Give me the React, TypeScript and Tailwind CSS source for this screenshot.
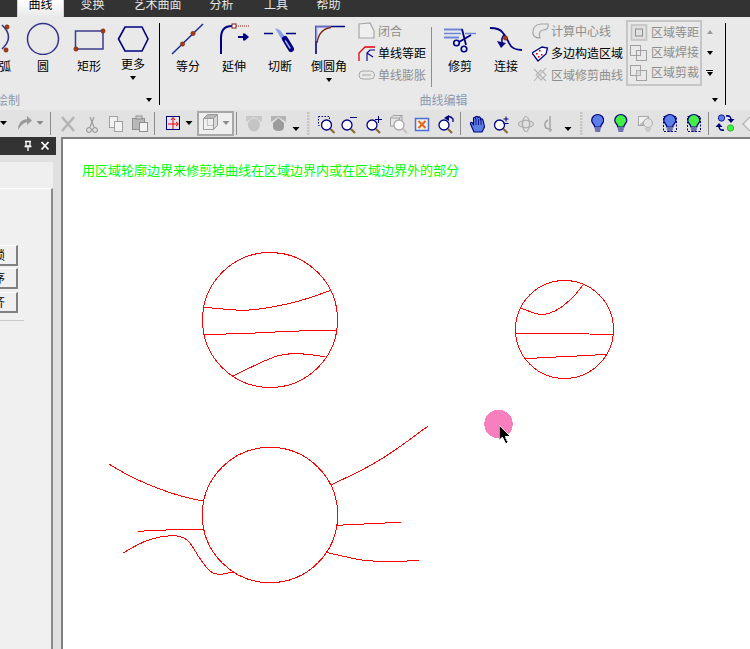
import React from "react";

const NAVY = "#000080";
const GR = "#a6a6a6";

const Caret = ({ c = "border-t-black" }: { c?: string }) => (
  <div className={`w-0 h-0 border-x-[3.5px] border-t-[4px] border-x-transparent ${c}`} />
);

const Big = ({ x, w, label, caret, up, children }: { x: number; w: number; label: string; caret?: boolean; up?: boolean; children: React.ReactNode }) => (
  <div className="flex flex-col items-center shrink-0" style={{ width: w }}>
    <svg width={w} height={34} viewBox={`${x} 21 ${w} 34`} className="shrink-0">{children}</svg>
    <div className={`text-[12px] leading-4 text-black whitespace-nowrap ${up ? "mt-[1px]" : "mt-[3px]"}`}>{label}</div>
    {caret && <div className="mt-[4px]"><Caret /></div>}
  </div>
);

const Row = ({ x, cy, w = 17, h, mt, label, on, children }: { x: number; cy: number; w?: number; h: string; mt: string; label: string; on?: boolean; children: React.ReactNode }) => (
  <div className={`flex items-center ${h} ${mt}`}>
    <svg width={w} height={18} viewBox={`${x} ${cy - 9} ${w} 18`} className="shrink-0">{children}</svg>
    <span className={`ml-[2px] text-[12px] leading-4 whitespace-nowrap ${on ? "text-black" : "text-[#8e8e8e]"}`}>{label}</span>
  </div>
);

const BoxRow = ({ x, cy, label, children }: { x: number; cy: number; label: string; children: React.ReactNode }) => (
  <div className="flex items-center h-5">
    <svg width={18} height={18} viewBox={`${x} ${cy - 9} 18 18`} className="shrink-0">{children}</svg>
    <span className="ml-[3px] text-[12px] leading-4 text-[#8e8e8e] whitespace-nowrap">{label}</span>
  </div>
);

const Cell = ({ a, b, children }: { a: number; b: number; children?: React.ReactNode }) => (
  <svg width={b - a} height={27} viewBox={`${a} 110 ${b - a} 27`} className="shrink-0">{children}</svg>
);

const Sep = () => <div className="w-px h-[23px] bg-[#8c8c8c] shrink-0" />;

const Tri = ({ x, y = 123, c = "#000" }: { x: number; y?: number; c?: string }) => (
  <polygon points={`${x - 3.5},${y - 2} ${x + 3.5},${y - 2} ${x},${y + 2}`} fill={c} />
);

const Mag = ({ x, y, c = NAVY, h = "#8a6a28" }: { x: number; y: number; c?: string; h?: string }) => (
  <g>
    <line x1={x + 4} y1={y + 4} x2={x + 8} y2={y + 8} stroke={h} strokeWidth="2.2" />
    <circle cx={x} cy={y} r="5" fill="#fff" stroke={c} strokeWidth="1.3" />
  </g>
);

const Bulb = ({ x, f, s = NAVY }: { x: number; f: string; s?: string }) => (
  <g>
    <path d={`M${x - 3} 127 C${x - 3} 124 ${x - 6} 123.5 ${x - 6} 120.5 A6 6 0 0 1 ${x + 6} 120.5 C${x + 6} 123.5 ${x + 3} 124 ${x + 3} 127 Z`} fill={f} stroke={s} strokeWidth="1.2" />
    <path d={`M${x - 3} 129 H${x + 3} M${x - 2.5} 131 H${x + 2.5}`} stroke={s} strokeWidth="1.2" />
  </g>
);

const Grip = ({ x }: { x: number }) => (
  <g fill="#c4c4c4">
    {[112, 115, 118, 121, 124, 127, 130, 133].map((y) => (
      <rect key={y} x={x} y={y} width="2.5" height="2" />
    ))}
  </g>
);

const smooth = (p: number[][]) => {
  let d = `M${p[0][0]} ${p[0][1]}`;
  for (let i = 1; i < p.length - 1; i++) {
    const mx = (p[i][0] + p[i + 1][0]) / 2;
    const my = (p[i][1] + p[i + 1][1]) / 2;
    d += ` Q${p[i][0]} ${p[i][1]} ${mx} ${my}`;
  }
  const l = p[p.length - 1];
  return d + ` L${l[0]} ${l[1]}`;
};

const curves: number[][][] = [
  [[203.3, 307.3], [223.3, 309], [243.3, 310.7], [263.3, 308.7], [283.3, 305], [303.3, 300], [330, 290.7]],
  [[203.3, 334.7], [253.3, 333.3], [286.7, 331.3], [336.7, 330]],
  [[232.7, 376.3], [270, 357.3], [290, 353.3], [306.7, 354], [325, 356.7]],
  [[520.3, 308], [531.7, 312.3], [541.7, 315.3], [555, 311.7], [566.7, 303.3], [576.7, 293.3], [583.7, 284]],
  [[515.3, 333.3], [564.3, 333.7], [613.3, 334.3]],
  [[524.3, 358.7], [555, 357], [585, 355.7], [605.7, 354.3]],
  [[109.3, 464.3], [120, 471], [140, 481], [160, 489.3], [183.3, 497], [203.3, 501]],
  [[138.3, 531.3], [155, 530.3], [188.3, 529.3], [203.3, 529]],
  [[122.7, 553.3], [140, 542.7], [160, 536.3], [179.3, 535.3], [190, 541.7], [198.3, 556.7], [208.3, 570], [216.7, 575.3], [233.3, 572]],
  [[330.7, 485], [363.3, 470], [393.3, 451.7], [427.7, 426.3]],
  [[336.7, 525.3], [370, 523.7], [401, 522.3]],
  [[326, 552.3], [353.3, 558.7], [370, 561.3], [403.3, 561.3], [419, 560.3]],
];

const Dot = ({ x, y }: { x: number; y: number }) => <circle cx={x} cy={y} r="2.2" fill="#a63a16" stroke="#6b2a10" strokeWidth="0.5" />;

export default function App() {
  return (
    <div className="w-[750px] h-[649px] overflow-hidden flex flex-col bg-[#e4e4e4] font-['Noto_Sans_CJK_SC',sans-serif]">
      {/* tab bar */}
      <div className="h-[17px] bg-[#333333] flex shrink-0 overflow-hidden text-[12px] leading-[12px] text-[#e6e6e6]">
        <div className="w-[17px] shrink-0" />
        <div className="w-[47px] h-[17px] bg-gradient-to-b from-[#ffffff] to-[#e9e9e9] border-x border-[#b9dbe4] text-black text-center shrink-0">
          <div className="-mt-[2px]">曲线</div>
        </div>
        <div className="w-[57px] text-center shrink-0"><div className="-mt-[2px]">变换</div></div>
        <div className="w-[73px] text-center shrink-0"><div className="-mt-[2px]">艺术曲面</div></div>
        <div className="w-[55px] text-center shrink-0"><div className="-mt-[2px]">分析</div></div>
        <div className="w-[54px] text-center shrink-0"><div className="-mt-[2px]">工具</div></div>
        <div className="w-[51px] text-center shrink-0"><div className="-mt-[2px]">帮助</div></div>
      </div>

      {/* ribbon */}
      <div className="h-[93px] bg-[#e9e9e9] flex shrink-0 overflow-hidden">
        {/* group 1 */}
        <div className="-ml-[14px] w-[173px] shrink-0 flex flex-col">
          <div className="flex pt-[4px]">
            <Big x={-14} w={38} label="弧">
              <path d="M3 25 Q16 37 3 49" fill="none" stroke="#33338a" strokeWidth="1.6" transform="translate(-1 0)" />
              <Dot x={7} y={27} />
              <Dot x={6} y={50} />
            </Big>
            <Big x={24} w={38} label="圆">
              <circle cx="43" cy="39" r="15.5" fill="none" stroke="#33338a" strokeWidth="1.5" />
            </Big>
            <Big x={62} w={54} label="矩形">
              <rect x="75.5" y="31" width="27.5" height="18" fill="none" stroke="#3d3d90" strokeWidth="1.5" />
              <Dot x={103} y={31} />
              <Dot x={76} y={49} />
            </Big>
            <Big x={116} w={34} label="更多" caret up>
              <polygon points="118.5,39 125,27 142,27 148,39 142,51 125,51" fill="none" stroke={NAVY} strokeWidth="1.6" />
            </Big>
          </div>
          <div className="mt-auto h-5 flex items-center justify-between pl-[10px] pr-[7px] text-[12px] leading-4 text-[#8c9ab0]">
            <span>绘制</span>
            <Caret />
          </div>
        </div>

        <div className="w-px h-[82px] mt-[6px] bg-black shrink-0" />

        {/* group 2 */}
        <div className="ml-px w-[564px] shrink-0 flex flex-col">
          <div className="flex pt-[4px] pl-[4px]">
            <Big x={165} w={46} label="等分">
              <line x1="172" y1="54" x2="203" y2="24" stroke="#1a2a90" strokeWidth="1.5" />
              <Dot x={193} y={33.5} />
              <Dot x={182.5} y={44} />
            </Big>
            <Big x={211} w={46} label="延伸">
              <path d="M221 54 V38 Q221 26 232 26" fill="none" stroke={NAVY} strokeWidth="2" />
              <rect x="232" y="24" width="4" height="4" fill="#fff" stroke="#7a1a10" />
              <line x1="236" y1="26" x2="249" y2="26" stroke="#8a2015" strokeDasharray="1 1" />
              <path d="M238 37 H243" stroke={NAVY} strokeWidth="2" />
              <polygon points="243,33.5 245,33.5 249,37 245,40.5 243,40.5" fill={NAVY} />
            </Big>
            <Big x={257} w={46} label="切断">
              <path d="M264 33.5 H273 M286 33.5 H296" stroke={NAVY} strokeWidth="1.6" />
              <polygon points="275,28 280,30 286,38 282,40" fill="#8aa0e8" />
              <path d="M285 39 L291 49" stroke={NAVY} strokeWidth="6" strokeLinecap="round" />
              <path d="M285.5 41 L290 48" stroke="#9fb0f0" strokeWidth="1.5" strokeLinecap="round" />
            </Big>
            <Big x={303} w={52} label="倒圆角" caret>
              <path d="M316 54 V26.5 H345" fill="none" stroke={NAVY} strokeWidth="1.6" />
              <path d="M316.5 41 V27 H331" fill="none" stroke="#8b97e0" strokeWidth="1.6" />
              <path d="M317 43 Q319 29 331 27.5" fill="none" stroke="#7a2a20" strokeWidth="1.3" />
            </Big>
            <div className="w-[76px] shrink-0 pl-[2px] flex flex-col">
              <Row x={356} cy={31} h="h-5" mt="mt-0" label="闭合" w={19}>
                <polygon points="358,24 369,23 373,31 373,38 358,38" fill="#efefef" stroke={GR} strokeWidth="1.2" />
              </Row>
              <Row x={356} cy={52} h="h-[21px]" mt="mt-px" label="单线等距" on w={19}>
                <path d="M358 60 V52 L364 46 H374" fill="none" stroke="#e8000f" strokeWidth="1.3" />
                <path d="M366 60 V52 L369 49 H374 M366 52 L372 56" fill="none" stroke={NAVY} strokeWidth="1.1" />
              </Row>
              <Row x={356} cy={75} h="h-[22px]" mt="mt-px" label="单线膨胀" w={19}>
                <rect x="358" y="71" width="15.5" height="8" rx="4" fill="none" stroke={GR} />
                <line x1="361" y1="75" x2="370" y2="75" stroke={GR} />
              </Row>
            </div>
            <div className="w-px h-[60px] mt-[6px] bg-[#8c8c8c] shrink-0" />
            <div className="w-[5px] shrink-0" />
            <Big x={437} w={46} label="修剪">
              <path d="M444 29.5 H462" stroke="#6f86d8" strokeWidth="2" />
              <path d="M444 33.5 H461 M465 33.5 H476" stroke="#6f86d8" strokeWidth="1.6" />
              <path d="M444 37.5 H459" stroke="#6f86d8" strokeWidth="2" />
              <path d="M459 42 L471 35 M466 45 L462 29" stroke={NAVY} strokeWidth="1.8" />
              <circle cx="456.5" cy="43" r="2.8" fill="none" stroke={NAVY} strokeWidth="1.6" />
              <circle cx="464" cy="49" r="2.8" fill="none" stroke={NAVY} strokeWidth="1.6" />
            </Big>
            <Big x={483} w={46} label="连接">
              <path d="M490 28 Q500 28 503 33 Q507 38 509 43 Q512 50 522 50" fill="none" stroke={NAVY} strokeWidth="1.8" />
              <path d="M505 34 Q500 38 503 45" fill="none" stroke={NAVY} strokeWidth="1.5" />
              <polygon points="497,41 506,43 501,48" fill={NAVY} />
              <Dot x={505.5} y={38} />
            </Big>
            <div className="w-[97px] shrink-0 pl-[3px] flex flex-col">
              <Row x={532} cy={31} h="h-5" mt="mt-0" label="计算中心线">
                <path d="M533 34 Q532 25 541 24 H548 Q549 30 543 30 Q538 31 540 38 Q534 38 533 34Z" fill="none" stroke={GR} strokeWidth="1.2" />
              </Row>
              <Row x={532} cy={52} h="h-[21px]" mt="mt-px" label="多边构造区域" on>
                <polygon points="532,52 542,46 547.5,47 546,53 538,60" fill="#fff" stroke={NAVY} strokeWidth="1.3" />
                <g fill="#e00010">
                  <rect x="539" y="49" width="1.6" height="1.6" />
                  <rect x="536" y="52" width="1.6" height="1.6" />
                  <rect x="541" y="53" width="1.6" height="1.6" />
                  <rect x="538" y="55" width="1.6" height="1.6" />
                </g>
              </Row>
              <Row x={532} cy={75} h="h-[22px]" mt="mt-px" label="区域修剪曲线">
                <path d="M534 69 L546 81 M546 68 L534 81 M536 75 L541 70 L546 75 L541 80Z" fill="none" stroke="#b4b4b4" strokeWidth="1.1" />
              </Row>
            </div>
            <div className="w-[76px] h-[66px] -mt-px shrink-0 border-2 border-[#c6c6c6] pl-[2px]">
              <BoxRow x={631} cy={32} label="区域等距">
                <rect x="632.5" y="25" width="15" height="15" fill="#e0e0e0" stroke="#c0c0c0" strokeWidth="1.5" />
                <rect x="636.5" y="29" width="7" height="7" fill="none" stroke="#8e8e8e" />
              </BoxRow>
              <BoxRow x={631} cy={52} label="区域焊接">
                <rect x="631.5" y="45.5" width="10" height="10" fill="none" stroke="#a0a0a0" />
                <rect x="637.5" y="50.5" width="10" height="10" fill="none" stroke="#a0a0a0" />
                <rect x="637.5" y="50.5" width="4" height="5" fill="none" stroke="#a0a0a0" strokeDasharray="1 1" />
              </BoxRow>
              <BoxRow x={631} cy={72} label="区域剪裁">
                <rect x="631.5" y="65.5" width="10" height="10" fill="none" stroke="#a0a0a0" />
                <rect x="637.5" y="70.5" width="10" height="10" fill="none" stroke="#a0a0a0" />
                <rect x="637.5" y="70.5" width="4" height="5" fill="#dcdcdc" stroke="#a0a0a0" strokeDasharray="1 1" />
              </BoxRow>
            </div>
            <div className="w-[15px] shrink-0 flex flex-col items-center -mt-px">
              <div className="h-[23px] flex items-center pt-[1px]">
                <div className="w-0 h-0 border-x-[3.5px] border-b-[4px] border-x-transparent border-b-[#9a9a9a]" />
              </div>
              <div className="h-[20px] flex items-center"><Caret /></div>
              <div className="h-[20px] flex flex-col items-center justify-center gap-[1px]">
                <div className="w-[7px] h-px bg-black" />
                <Caret />
              </div>
            </div>
          </div>
          <div className="mt-auto h-5 flex items-center pr-[7px] text-[12px] leading-4 text-[#8c9ab0]">
            <span className="flex-1 text-center pl-[14px]">曲线编辑</span>
            <Caret />
          </div>
        </div>

        <div className="w-px h-[82px] mt-[6px] bg-black shrink-0" />
      </div>

      {/* toolbar */}
      <div className="h-[27px] bg-[#e2e2e2] flex items-center shrink-0 overflow-hidden">
        <Cell a={0} b={50}>
          <Tri x={3.5} />
          <path d="M18 130 Q18 120 27 119 V116 L32 120.5 L27 125 V122 Q22 123 18 130Z" fill="#9a9a9a" />
          <Tri x={40} c="#8a8a8a" />
        </Cell>
        <Sep />
        <Cell a={51} b={154}>
          <path d="M62 117 L74 131 M74 117 L62 131" stroke="#b4b4b4" strokeWidth="2.5" />
          <path d="M94 117 L90 127 M90 117 L94 127" stroke="#9a9a9a" strokeWidth="1.2" />
          <circle cx="89" cy="130" r="2.4" fill="none" stroke="#8a8a8a" />
          <circle cx="95" cy="130" r="2.4" fill="none" stroke="#8a8a8a" />
          <rect x="109.5" y="116.5" width="8" height="11" fill="#f2f2f2" stroke="#a0a0a0" />
          <rect x="114.5" y="121.5" width="8" height="10" fill="#f2f2f2" stroke="#a0a0a0" />
          <rect x="132.5" y="118.5" width="12" height="11" fill="#b8b8b8" stroke="#8e8e8e" />
          <rect x="136" y="116" width="6" height="3" fill="#d0d0d0" stroke="#8e8e8e" />
          <rect x="139.5" y="122.5" width="8" height="9" fill="#f2f2f2" stroke="#8e8e8e" />
        </Cell>
        <Sep />
        <Cell a={155} b={197}>
          <rect x="166.5" y="116.5" width="13" height="13" fill="#e6e6f2" stroke={NAVY} />
          <path d="M173 118 V129 M168 124 H178" stroke="#ee0000" />
          <path d="M171 120 L173 117.5 L175 120 M176 122 L178.5 124 L176 126" fill="none" stroke="#ee0000" />
          <Tri x={189} />
        </Cell>
        <div className="w-[37px] h-[25px] border-2 border-[#a8a8a8] bg-[#efefef] shrink-0">
          <svg width={33} height={21} viewBox="199 114 33 21" className="block">
            <rect x="203.5" y="119.5" width="10" height="11" fill="none" stroke="#a0a0a0" />
            <rect x="207.5" y="115.5" width="10" height="11" fill="none" stroke="#c4c4c4" />
            <path d="M203.5 119.5 L207.5 115.5 H217.5 L213.5 119.5 Z" fill="#b8b8b8" stroke="#9a9a9a" />
            <path d="M213.5 119.5 L217.5 115.5 V126.5 L213.5 130.5Z" fill="#d8d8d8" stroke="#9a9a9a" />
            <Tri x={226} y={124} c="#8e8e8e" />
          </svg>
        </div>
        <Cell a={234} b={236} />
        <Sep />
        <Cell a={237} b={460}>
          <path d="M246 116 H262 V122 L254 117 L246 122Z" fill="#c8c8c8" />
          <ellipse cx="254" cy="125" rx="6" ry="6.5" fill="#c4c4c4" />
          <path d="M271 116 H286 V122 L278.5 117 L271 122Z" fill="#b4b4b4" />
          <path d="M278.5 118 L284 123 V127 Q284 131 278.5 131 Q273 131 273 127 V123Z" fill="#9c9c9c" />
          <Tri x={296} y={129} />
          <Grip x={307} />
          <rect x="318.5" y="116.5" width="11" height="9" fill="none" stroke={NAVY} strokeDasharray="1.5 1.5" />
          <Mag x={326.5} y={125} />
          <Mag x={347} y={125} />
          <path d="M350 117.5 H357" stroke={NAVY} />
          <Mag x={372} y={125} />
          <path d="M378.5 116 V123 M375 119.5 H382" stroke={NAVY} />
          <rect x="390.5" y="118" width="9" height="8" fill="#e6e6e6" stroke="#a0a0a0" />
          <path d="M390.5 118 L393 115.5 H402 L399.5 118 M402 115.5 V123" fill="none" stroke="#a0a0a0" />
          <Mag x={399} y={125} c="#a8a8a8" h="#c0c0c0" />
          <rect x="415.5" y="118.5" width="13" height="12" fill="#f4f0e6" stroke="#4a70d8" strokeWidth="1.5" />
          <path d="M418.5 121 L425.5 128 M425.5 121 L418.5 128" stroke="#e8641c" strokeWidth="2" />
          <Mag x={444} y={125} />
          <path d="M446 118 Q449 114.5 453 119 V122" fill="none" stroke={NAVY} strokeWidth="1.3" />
          <polygon points="444,118 449,115 449,121" fill={NAVY} />
        </Cell>
        <Sep />
        <Cell a={461} b={604}>
          <path d="M474 132 L470.5 124 Q470 122 472 122.5 L473.5 124.5 V118 Q474.5 116.5 475.5 118 V117 Q476.5 115.5 478 117 V117.5 Q479.5 116 480.5 118 V119.5 Q482 118 483 120 L484.5 127 L482 132Z" fill="#5c7ee0" stroke={NAVY} strokeWidth="1.1" />
          <path d="M476 119 V125 M478.5 119 V125 M481 120 V125" stroke={NAVY} strokeWidth="0.8" />
          <Mag x={499.5} y={125} />
          <path d="M506 116.5 V121.5 M503.5 119 H508.5 M503.5 123.5 H508.5" stroke={NAVY} />
          <g fill="none" stroke="#b0b0b0" strokeWidth="1.2">
            <ellipse cx="526" cy="124" rx="7.5" ry="3.5" />
            <ellipse cx="526" cy="124" rx="3.5" ry="7.5" />
            <circle cx="526" cy="124" r="4" />
          </g>
          <path d="M550 116 V132 M548 120 Q543 123 546 128 L552 130" fill="none" stroke="#a8a8a8" strokeWidth="1.6" />
          <Tri x={568} y={129} />
          <Grip x={580} />
          <Bulb x={597.7} f="#5c7ee8" />
        </Cell>
        <Cell a={604} b={708}>
          <Bulb x={620.8} f="#44ee44" />
          <rect x="638.5" y="116.5" width="10" height="9" fill="#f0f0f0" stroke="#a8a8a8" />
          <polygon points="639,125 648,117 648,125" fill="#b8b8b8" />
          <circle cx="648" cy="123" r="4.5" fill="#e2e2e2" stroke="#b0b0b0" />
          <path d="M645 129 H651 M646 131 H650" stroke="#b0b0b0" />
          <rect x="663.5" y="116.5" width="13" height="15" fill="none" stroke={NAVY} strokeDasharray="2 1.5" />
          <Bulb x={669.8} f="#5c7ee8" />
          <rect x="687.5" y="116.5" width="13" height="15" fill="none" stroke={NAVY} strokeDasharray="2 1.5" />
          <Bulb x={693.8} f="#44ee44" />
        </Cell>
        <Sep />
        <Cell a={709} b={750}>
          <circle cx="721.5" cy="118" r="3.2" fill="#5c7ee8" stroke={NAVY} strokeWidth="0.8" />
          <path d="M726 116 Q731 115 731 120" fill="none" stroke={NAVY} strokeWidth="1.6" />
          <polygon points="727.5,119 734.5,119 731,123" fill={NAVY} />
          <path d="M724 130 Q719 131 719 126" fill="none" stroke={NAVY} strokeWidth="1.6" />
          <polygon points="715.5,127 722.5,127 719,123" fill={NAVY} />
          <circle cx="730.5" cy="128" r="3.2" fill="#44ee44" stroke="#30a030" strokeWidth="0.8" />
          <path d="M750 117 L743 124 L750 131" fill="#efefef" stroke="#b0b0b0" strokeWidth="1.2" />
        </Cell>
      </div>

      {/* body */}
      <div className="flex-1 flex min-h-0">
        <div className="w-[61px] shrink-0 bg-[#e0e0e0] flex flex-col overflow-hidden">
          <div className="w-[56px] h-[18px] bg-[#333333] flex items-center shrink-0">
            <svg width={56} height={18} viewBox="0 137 56 18" className="block">
              <path d="M25 141.5 H31 M26 141.5 V146 H30 V141.5 M24.5 146.5 H31.5 M28 146.5 V151" fill="none" stroke="#fff" strokeWidth="1.3" />
              <path d="M41.5 142 L48.5 149.5 M48.5 142 L41.5 149.5" stroke="#fff" strokeWidth="1.8" />
            </svg>
          </div>
          <div className="h-[7px] shrink-0" />
          <div className="w-[53px] h-[26px] bg-[#efefef] shrink-0" />
          <div className="w-[53px] flex-1 flex flex-col bg-[#f0f0f0] border-t border-t-white border-r-2 border-r-[#8a8a8a]">
            <div className="h-[56px] shrink-0" />
            {[["锁", "h-[21px]"], ["序", "h-[21px] mt-[2px]"], ["齐", "h-[21px] mt-[3px]"]].map(([t, c]) => (
              <div key={t} className={`w-[18px] ${c} flex items-center justify-end pr-[11px] bg-[#f0f0f0] border-t border-t-white border-r-2 border-b-2 border-r-[#808080] border-b-[#808080] text-[12px] leading-4 text-black shrink-0 whitespace-nowrap`}>
                <span className="shrink-0">{t}</span>
              </div>
            ))}
            <div className="w-[24px] h-px mt-[7px] bg-[#c8c8c8] shrink-0" />
          </div>
        </div>

        <div className="relative flex-1 bg-white border-l-2 border-t-2 border-[#808080] min-w-0 overflow-hidden">
          <svg className="absolute inset-0" width={687} height={510} viewBox="63 139 687 510" shapeRendering="crispEdges" fill="none">
            <circle cx="270" cy="320" r="67.5" stroke="#ff0000" />
            <circle cx="564.5" cy="329.5" r="49" stroke="#ff0000" />
            <circle cx="270" cy="515" r="67.7" stroke="#ff0000" />
            {curves.map((c, i) => (
              <path key={i} d={smooth(c)} stroke="#ff0000" />
            ))}
            <circle cx="498.5" cy="424" r="14.2" fill="#f77fbe" />
            <polygon points="499,425 499,440 502.5,437 505.5,443.5 508,442 505,436.5 509.5,436" fill="#000" stroke="#fff" strokeWidth="0.6" />
          </svg>
          <div className="relative pl-[19px] pt-[23px] text-[13px] leading-4 text-[#00ff00] whitespace-nowrap">
            用区域轮廓边界来修剪掉曲线在区域边界内或在区域边界外的部分
          </div>
        </div>
      </div>
    </div>
  );
}
